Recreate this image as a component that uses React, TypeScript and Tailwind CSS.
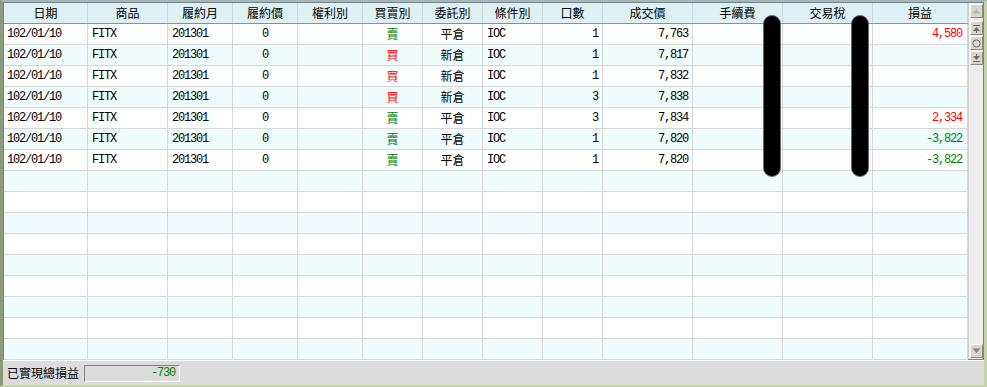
import React from 'react';

type Row = {
  side: '買' | '賣';
  kind: string;
  qty: string;
  price: string;
  pl?: string;
};

const cols = [
  { title: '日期', w: 'w-[84px]' },
  { title: '商品', w: 'w-[80px]' },
  { title: '履約月', w: 'w-[65px]' },
  { title: '履約價', w: 'w-[65px]' },
  { title: '權利別', w: 'w-[65px]' },
  { title: '買賣別', w: 'w-[60px]' },
  { title: '委託別', w: 'w-[60px]' },
  { title: '條件別', w: 'w-[60px]' },
  { title: '口數', w: 'w-[60px]' },
  { title: '成交價', w: 'w-[90px]' },
  { title: '手續費', w: 'w-[90px]' },
  { title: '交易稅', w: 'w-[90px]' },
  { title: '損益', w: 'w-[95px]' },
];

const rows: Row[] = [
  { side: '賣', kind: '平倉', qty: '1', price: '7,763', pl: '4,580' },
  { side: '買', kind: '新倉', qty: '1', price: '7,817' },
  { side: '買', kind: '新倉', qty: '1', price: '7,832' },
  { side: '買', kind: '新倉', qty: '3', price: '7,838' },
  { side: '賣', kind: '平倉', qty: '3', price: '7,834', pl: '2,334' },
  { side: '賣', kind: '平倉', qty: '1', price: '7,820', pl: '-3,822' },
  { side: '賣', kind: '平倉', qty: '1', price: '7,820', pl: '-3,822' },
];

const mono = "font-['Liberation_Mono',monospace] text-[12px] tracking-[-1.2px]";
const cjk = "font-['Noto_Sans_CJK_TC',sans-serif] text-[12px]";
const cell = 'h-[21px] border-r border-b border-[#d6d6d6] flex items-center shrink-0';

function ScrollBtn({ children }: { children: React.ReactNode }) {
  return (
    <div className="w-[13px] h-[14px] mx-auto bg-[#d8d5cb] border-t border-l border-t-white border-l-white border-r border-b border-r-[#8f8c80] border-b-[#8f8c80] flex items-center justify-center">
      {children}
    </div>
  );
}

function DataRow({ r, i }: { r?: Row; i: number }) {
  const bg = i % 2 === 0 ? 'bg-white' : 'bg-[#effcfd]';
  const sideColor = r?.side === '買' ? 'text-[#ff0000]' : 'text-[#008000]';
  const plColor = r?.pl?.startsWith('-') ? 'text-[#008000]' : 'text-[#ff0000]';
  return (
    <div className={`flex ${bg}`}>
      <div className={`${cell} ${cols[0].w} pl-[3px] ${mono}`}>{r && '102/01/10'}</div>
      <div className={`${cell} ${cols[1].w} pl-[4px] ${mono}`}>{r && 'FITX'}</div>
      <div className={`${cell} ${cols[2].w} pl-[4px] ${mono}`}>{r && '201301'}</div>
      <div className={`${cell} ${cols[3].w} justify-center ${mono}`}>{r && '0'}</div>
      <div className={`${cell} ${cols[4].w}`} />
      <div className={`${cell} ${cols[5].w} justify-center ${cjk} ${sideColor}`}>{r?.side}</div>
      <div className={`${cell} ${cols[6].w} justify-center ${cjk}`}>{r?.kind}</div>
      <div className={`${cell} ${cols[7].w} pl-[4px] ${mono}`}>{r && 'IOC'}</div>
      <div className={`${cell} ${cols[8].w} justify-end pr-[4px] ${mono}`}>{r?.qty}</div>
      <div className={`${cell} ${cols[9].w} justify-end pr-[4px] ${mono}`}>{r?.price}</div>
      <div className={`${cell} ${cols[10].w}`} />
      <div className={`${cell} ${cols[11].w}`} />
      <div className={`${cell} ${cols[12].w} justify-end pr-[5px] ${mono} ${plColor}`}>{r?.pl}</div>
    </div>
  );
}

export default function App() {
  const all = Array.from({ length: 16 }, (_, i) => rows[i]);
  return (
    <div className="relative w-[987px] h-[387px] bg-[#dcdcdc] flex flex-col border-t-2 border-t-[#a9b5b6] border-l-[3px] border-l-[#8b9a7d] border-r-[3px] border-r-[#c6d5a4] border-b-2 border-b-[#c6d5a4] text-black overflow-hidden">
      <div className="flex border border-[#6e878c] bg-white h-[358px] shrink-0">
        <div className="flex flex-col w-[964px]">
          <div className="flex bg-[#ddf0f3] border-b border-[#7d9599]">
            {cols.map((c) => (
              <div
                key={c.title}
                className={`${c.w} h-[20px] shrink-0 border-r border-[#c9d9dc] flex items-center justify-center ${cjk}`}
              >
                {c.title}
              </div>
            ))}
          </div>
          {all.map((r, i) => (
            <DataRow key={i} r={r} i={i} />
          ))}
        </div>
        <div className="w-[15px] bg-[#ececec] border-l border-[#d0d0d0] flex flex-col pt-[1px]">
          <ScrollBtn>
            <svg width="9" height="6" viewBox="0 0 9 6"><path d="M0.5 5.5 L4.5 1 L8.5 5.5 Z" fill="#b8b6ac" /></svg>
          </ScrollBtn>
          <div className="h-[3px]" />
          <ScrollBtn>
            <svg width="9" height="9" viewBox="0 0 9 9">
              <rect x="1" y="1" width="7" height="1" fill="#6e6c62" />
              <path d="M1 7 L4.5 3 L8 7 Z" fill="#6e6c62" />
              <rect x="4" y="6" width="1" height="3" fill="#6e6c62" />
            </svg>
          </ScrollBtn>
          <div className="h-[1px]" />
          <ScrollBtn>
            <svg width="9" height="9" viewBox="0 0 9 9"><circle cx="4.5" cy="4.5" r="3.6" fill="none" stroke="#6e6c62" strokeWidth="1" /></svg>
          </ScrollBtn>
          <div className="h-[1px]" />
          <ScrollBtn>
            <svg width="9" height="9" viewBox="0 0 9 9">
              <rect x="4" y="0" width="1" height="3" fill="#6e6c62" />
              <path d="M1 2 L4.5 6 L8 2 Z" fill="#6e6c62" />
              <rect x="1" y="7" width="7" height="1" fill="#6e6c62" />
            </svg>
          </ScrollBtn>
          <div className="flex-1" />
          <ScrollBtn>
            <svg width="9" height="6" viewBox="0 0 9 6"><path d="M0.5 0.5 L4.5 5 L8.5 0.5 Z" fill="#8a887c" /></svg>
          </ScrollBtn>
          <div className="h-[1px]" />
        </div>
      </div>
      <div className="flex-1 flex items-center border-t border-t-white">
        <span className={`pl-[4px] w-[81px] whitespace-nowrap ${cjk}`}>已實現總損益</span>
        <div className={`w-[96px] h-[17px] border-t border-l border-t-[#808080] border-l-[#808080] border-r border-b border-r-white border-b-white flex items-center justify-end pr-[4px] ${mono} text-[#008000]`}>
          -730
        </div>
      </div>
      <div className="absolute left-[760px] top-[13px] w-[18px] h-[162px] rounded-full bg-black border border-[#6a6a6a]" />
      <div className="absolute left-[848px] top-[13px] w-[18px] h-[162px] rounded-full bg-black border border-[#6a6a6a]" />
    </div>
  );
}
